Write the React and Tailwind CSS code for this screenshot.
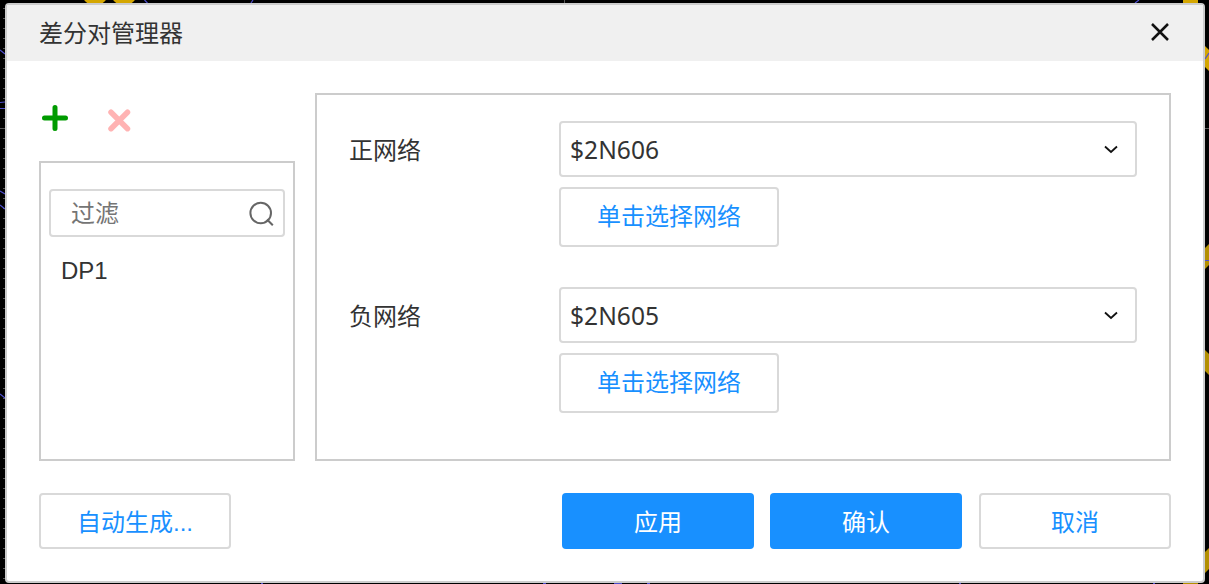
import React, { useState } from 'react';

const dots = Array.from({ length: 58 }, (_, i) => 8 + i * 10);

// PCB canvas behind the dialog
const BoardCanvas = () => (
  <svg className="absolute inset-0" width="1209" height="584" viewBox="0 0 1209 584" fill="none">
    {dots.map((y) => (
      <rect key={y} x="3" y={y} width="2" height="1" fill="#5a5a5a" />
    ))}
    <path d="M0 128.5H5M1205 128.5H1209M564.5 0V3" stroke="#555" />
    <g fill="#d4a600">
      <circle cx="95" cy="-8" r="13.5" />
      <circle cx="124" cy="-8" r="13.5" />
      <path d="M1183 0h15v3h-15zM1205 46l4 4v21l-4-4z" />
    </g>
    <path
      d="M1205 248l4-4v21l-4 4zM1205 350l4 4v21l-4-4zM1205 552l4-4v21l-4 4zM1183 583h15v1h-15z"
      fill="#b38f00"
    />
    <path
      d="M0 50l5 4M0 102.5l5-.5M0 108.5h5M0 191l5 3M0 205l5 4M0 394l5 4M144.500 0l3 3M253 0l-2 3M1139 0l-4 3M1205 59l4-6M1205 260.500h4M261 583.500h2M543 583.500h3M614 583.500h8M647 583.500h3M959 583.500h2M1153 583.500h2"
      stroke="#4d4dcc"
      strokeWidth="1.2"
    />
  </svg>
);

const NetRow = ({ label, value }) => (
  <div className="flex">
    <div className="w-[210px] h-14 flex items-center pt-1">{label}</div>
    <div className="flex-1">
      <button className="w-full h-14 pl-[9px] pr-[17px] flex items-center justify-between border-2 border-[#d9d9d9] rounded-[4px] font-['Noto_Sans'] text-[24.600px]">
        <span className="pt-0.5">{value}</span>
        <svg width="14" height="9" viewBox="0 0 14 9" fill="none" stroke="#111" strokeWidth="1.8">
          <path d="M1 1.500l6 5.500 6-5.500" />
        </svg>
      </button>
      <button className="mt-2.5 w-[220px] h-[60px] flex items-center justify-center border-2 border-[#d9d9d9] rounded-[4px] text-[#1890ff]">
        单击选择网络
      </button>
    </div>
  </div>
);

const App = () => {
  const [filter, setFilter] = useState('');

  return (
    <div className="relative w-[1209px] h-[584px] bg-black overflow-hidden pl-[5px] pt-[3px] font-['Liberation_Sans','Noto_Sans_CJK_SC',sans-serif] text-[24px] leading-[36px] text-[#333]">
      <BoardCanvas />

      <div className="relative w-[1200px] h-[580px] bg-white border-2 border-[#ccc] rounded-[4px] flex flex-col">
        {/* Header */}
        <div className="h-14 pl-8 pr-[34px] flex items-center justify-between bg-[#f0f0f0]">
          <h1 className="pt-0.5">差分对管理器</h1>
          <button className="-mt-0.5" aria-label="关闭">
            <svg width="18" height="18" viewBox="0 0 18 18" fill="none" stroke="#111" strokeWidth="2.500">
              <path d="M1 1l16 16M17 1L1 17" />
            </svg>
          </button>
        </div>

        {/* Body */}
        <div className="flex gap-5 px-8 pt-8">
          <div className="w-64">
            <div className="h-[68px] pl-[3px] pt-3 flex gap-10">
              <button className="h-[26px]" aria-label="添加">
                <svg width="26" height="26" viewBox="0 0 26 26" stroke="#009b00" strokeWidth="5" strokeLinecap="round">
                  <path d="M13 2.500v21M2.500 13h21" />
                </svg>
              </button>
              <button className="h-[24px] mt-[3px]" aria-label="删除">
                <svg width="24" height="24" viewBox="0 0 24 24" stroke="#ffb3b3" strokeWidth="5.500" strokeLinecap="round">
                  <path d="M3 4.200l16.500 16.500M19.500 4.200L3 20.700" />
                </svg>
              </button>
            </div>
            <div className="h-[300px] border-2 border-[#ccc] px-2 pt-[26px]">
              <div className="h-12 flex items-center border-2 border-[#d9d9d9] rounded-[4px] pl-5 pr-[9px]">
                <input
                  className="w-0 flex-1 pt-0.5 outline-none placeholder:text-[#757575]"
                  placeholder="过滤"
                  value={filter}
                  onChange={(e) => setFilter(e.target.value)}
                />
                <svg width="26" height="26" viewBox="0 0 26 26" fill="none" stroke="#666" strokeWidth="2">
                  <circle cx="12.700" cy="13" r="10.300" />
                  <path d="M19 19.500l5.800 5.800" />
                </svg>
              </div>
              <div className="mt-4 pl-3">DP1</div>
            </div>
          </div>

          <div className="flex-1 h-[368px] border-2 border-[#ccc] pl-8 pr-8 pt-[26px] flex flex-col gap-10">
            <NetRow label="正网络" value="$2N606" />
            <NetRow label="负网络" value="$2N605" />
          </div>
        </div>

        {/* Footer */}
        <div className="flex px-8 pt-8">
          <button className="w-48 h-14 pt-1 border-2 border-[#d9d9d9] rounded-[4px] text-[#1890ff]">自动生成...</button>
          <button className="ml-auto w-48 h-14 pt-1 rounded-[4px] bg-[#1890ff] text-white">应用</button>
          <button className="ml-4 w-48 h-14 pt-1 rounded-[4px] bg-[#1890ff] text-white">确认</button>
          <button className="ml-[17px] w-48 h-14 pt-1 border-2 border-[#d9d9d9] rounded-[4px] text-[#1890ff]">取消</button>
        </div>
      </div>
    </div>
  );
};

export default App;
